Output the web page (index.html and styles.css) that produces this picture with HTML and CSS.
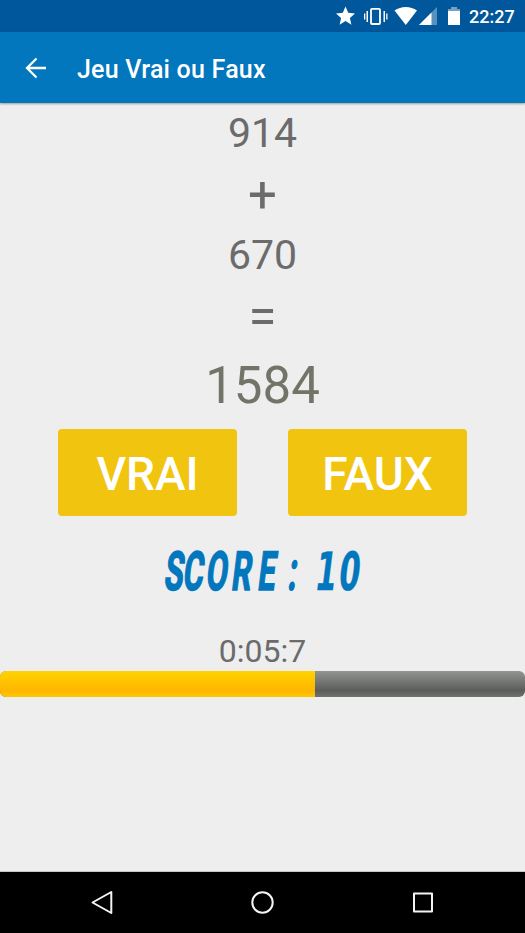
FILE: index.html
```html
<!DOCTYPE html>
<html lang="fr">
<head>
<meta charset="utf-8">
<title>Jeu Vrai ou Faux</title>
<link rel="stylesheet" href="styles.css">
</head>
<body>
<div class="status">
  <svg class="status-icons" width="130" height="32" viewBox="0 0 130 32" fill="#fff">
    <path d="M10.500 6.500l2.700 6.300 6.800.6-5.100 4.500 1.500 6.800-5.900-3.600-5.900 3.600 1.500-6.800L1 13.400l6.800-.6z"/>
    <rect x="36" y="8.800" width="9" height="15.200" rx="1" fill="none" stroke="#fff" stroke-width="1.800"/>
    <path d="M31.500 11H33v11h-1.500zM48.500 11H50v11h-1.500zM29 13.500h1.300v6H29zM51.200 13.500h1.300v6h-1.300z"/>
    <path d="M59.500 10.600C66 5.800 75.500 5.800 82 10.600L70.800 25z"/>
    <path d="M102 7v18H84z" opacity=".35"/>
    <path d="M96.500 12.500V25H84z"/>
    <path d="M113 9h3V7h6v2h3v2.500h-12z" opacity=".45"/>
    <path d="M113 11h12v14h-12z"/>
  </svg>
  <span class="clock">22:27</span>
</div>
<header class="toolbar">
  <svg width="22" height="22" viewBox="0 0 22 22" fill="none" stroke="#fff" stroke-width="2.300"><path d="M21 11H2.500M11.500 1.500L2 11l9.500 9.500"/></svg>
  <h1 class="title">Jeu Vrai ou Faux</h1>
</header>
<main class="game">
  <div class="number first">914</div>
  <div class="operator plus">+</div>
  <div class="number second">670</div>
  <div class="operator equals">=</div>
  <div class="result">1584</div>
  <div class="answers">
    <button class="answer">VRAI</button>
    <button class="answer">FAUX</button>
  </div>
  <svg class="score" width="525" height="90" viewBox="0 0 525 90">
    <text class="score-text" transform="translate(165 64) skewX(-7) scale(.57 1)" x="-3 30 70 115 161 187 214 237">SCORE : <tspan class="score-value" x="261 302">10</tspan></text>
  </svg>
  <div class="timer">0:05:7</div>
  <div class="progress"><div class="progress-fill"></div></div>
</main>
<nav class="navbar">
  <svg width="525" height="61" viewBox="0 0 525 61" fill="none" stroke="#f4f4f4" stroke-width="2" stroke-linejoin="round">
    <path d="M111.300 20v21L92.500 30.500z"/>
    <circle cx="262.500" cy="30.500" r="10.200"/>
    <rect x="414" y="21.500" width="18" height="18"/>
  </svg>
</nav>
</body>
</html>
```
FILE: styles.css
```css
* { box-sizing: border-box; }
body {
  margin: 0;
  width: 525px;
  height: 933px;
  display: flex;
  flex-direction: column;
  overflow: hidden;
  background: #eee;
  font-family: Roboto, sans-serif;
}
.status {
  height: 32px;
  flex: none;
  display: flex;
  align-items: center;
  justify-content: flex-end;
  padding-right: 10px;
  background: #01579b;
  color: #fff;
}
.status-icons { flex: none; margin-right: 4px; }
.clock { width: 46px; font-size: 18px; font-weight: 500; white-space: nowrap; }
.toolbar {
  height: 71px;
  flex: none;
  display: flex;
  align-items: center;
  gap: 30px;
  padding: 0 0 0 25px;
  background: #0277bd;
  box-shadow: 0 1px 2px rgba(0, 0, 0, .35);
}
.title { margin: 0; padding-top: 3px; color: #fff; font-size: 25px; font-weight: 500; letter-spacing: .22px; }
.game {
  flex: 1;
  display: flex;
  flex-direction: column;
  color: #6b6b6b;
  text-align: center;
  border-bottom: 1px solid #c2c8ca;
}
.number { font-size: 41px; }
.first { line-height: 60px; }
.second { line-height: 56px; }
.operator { font-size: 51px; }
.plus { line-height: 64px; }
.equals { line-height: 68px; }
.result { font-size: 51px; line-height: 70px; color: #717467; }
.answers { display: flex; justify-content: center; gap: 51px; padding-top: 8px; }
.answer {
  width: 179px;
  height: 87px;
  padding: 3px 0 0;
  border: 0;
  border-radius: 4px;
  background: #f1c40f;
  color: #fff;
  font: 500 46px Roboto, sans-serif;
}
.score { display: block; flex: none; margin-top: 10px; }
.score-text {
  font: 700 54px Roboto, sans-serif;
  fill: #0277bd;
  stroke: #0277bd;
  stroke-width: 1.6;
}
.score-value { font-family: "DejaVu Sans", sans-serif; font-size: 53px; stroke-width: .4; }
.timer { margin-top: 16px; font-size: 32px; line-height: 38px; }
.progress {
  height: 26px;
  flex: none;
  margin-top: 1px;
  overflow: hidden;
  border-radius: 6px;
  background: linear-gradient(#939592, #5a5d5a 75%, #70736f);
}
.progress-fill {
  width: 60%;
  height: 100%;
  background: linear-gradient(#ffd300, #ffb600 75%, #ffc800);
}
.navbar { height: 61px; flex: none; background: #000; }
.navbar svg { display: block; }
```
